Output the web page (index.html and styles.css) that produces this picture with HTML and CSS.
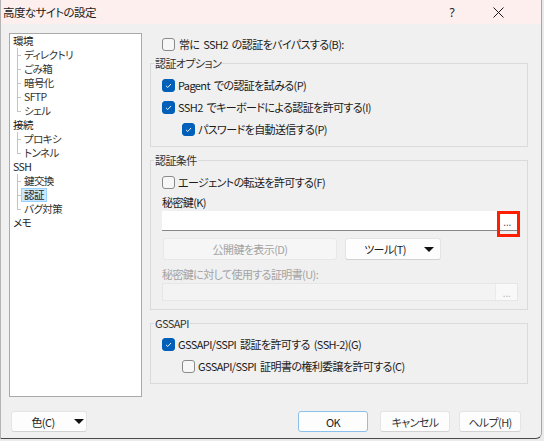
FILE: index.html
```html
<!DOCTYPE html>
<html lang="ja">
<head>
<meta charset="utf-8">
<title>高度なサイトの設定</title>
<link rel="stylesheet" href="styles.css">
</head>
<body>
<div class="window">
  <div class="titlebar">
    <span class="title">高度なサイトの設定</span>
    <span class="help">?</span>
    <span class="close"><svg width="11" height="11" viewBox="0 0 11 11"><path d="M0.5 0.5 L10.5 10.5 M10.5 0.5 L0.5 10.5" stroke="#1b1b1b" stroke-width="1" fill="none"/></svg></span>
  </div>
  <div class="main">
    <div class="tree">
      <div class="node">環境</div>
      <div class="child"><span class="conn"></span><span class="lbl">ディレクトリ</span></div>
      <div class="child"><span class="conn"></span><span class="lbl">ごみ箱</span></div>
      <div class="child"><span class="conn"></span><span class="lbl">暗号化</span></div>
      <div class="child"><span class="conn"></span><span class="lbl">SFTP</span></div>
      <div class="child"><span class="conn last"></span><span class="lbl">シェル</span></div>
      <div class="node">接続</div>
      <div class="child"><span class="conn"></span><span class="lbl">プロキシ</span></div>
      <div class="child"><span class="conn last"></span><span class="lbl">トンネル</span></div>
      <div class="node">SSH</div>
      <div class="child"><span class="conn"></span><span class="lbl">鍵交換</span></div>
      <div class="child"><span class="conn"></span><span class="lbl selected">認証</span></div>
      <div class="child"><span class="conn last"></span><span class="lbl">バグ対策</span></div>
      <div class="node">メモ</div>
    </div>
    <div class="content">
      <div class="toprow"><span class="cb"></span><span>常に SSH2 の認証をバイパスする(B):</span></div>

      <fieldset class="group g1">
        <legend>認証オプション</legend>
        <div class="gbody">
          <div class="row first"><span class="cb on"><svg viewBox="0 0 13 13"><path d="M3.6 6.9 L5.6 8.9 L9.5 4.7" stroke="#fff" stroke-width="1.1" fill="none"/></svg></span><span>Pagent での認証を試みる(P)</span></div>
          <div class="row"><span class="cb on"><svg viewBox="0 0 13 13"><path d="M3.6 6.9 L5.6 8.9 L9.5 4.7" stroke="#fff" stroke-width="1.1" fill="none"/></svg></span><span>SSH2 でキーボードによる認証を許可する(I)</span></div>
          <div class="row indent"><span class="cb on"><svg viewBox="0 0 13 13"><path d="M3.6 6.9 L5.6 8.9 L9.5 4.7" stroke="#fff" stroke-width="1.1" fill="none"/></svg></span><span>パスワードを自動送信する(P)</span></div>
        </div>
      </fieldset>

      <fieldset class="group g2">
        <legend>認証条件</legend>
        <div class="gbody">
          <div class="row first"><span class="cb"></span><span>エージェントの転送を許可する(F)</span></div>
          <div class="label">秘密鍵(K)</div>
          <div class="input">
            <span class="field"></span>
            <span class="dots">...</span>
            <span class="mark"></span>
          </div>
          <div class="btnrow">
            <span class="btn disabled pub">公開鍵を表示(D)</span>
            <span class="btn tool"><span class="tlabel">ツール(T)</span><span class="arrow"></span></span>
          </div>
          <div class="label dis">秘密鍵に対して使用する証明書(U):</div>
          <div class="input disabled">
            <span class="field"></span>
            <span class="dots">...</span>
          </div>
        </div>
      </fieldset>

      <fieldset class="group g3">
        <legend>GSSAPI</legend>
        <div class="gbody">
          <div class="row first"><span class="cb on"><svg viewBox="0 0 13 13"><path d="M3.6 6.9 L5.6 8.9 L9.5 4.7" stroke="#fff" stroke-width="1.1" fill="none"/></svg></span><span>GSSAPI/SSPI 認証を許可する (SSH-2)(G)</span></div>
          <div class="row indent"><span class="cb"></span><span>GSSAPI/SSPI 証明書の権利委譲を許可する(C)</span></div>
        </div>
      </fieldset>
    </div>
  </div>
  <div class="footer">
    <span class="btn color"><span class="clabel">色(C)</span><span class="arrow"></span></span>
    <span class="spacer"></span>
    <span class="btn ok">OK</span>
    <span class="btn cancel">キャンセル</span>
    <span class="btn helpbtn">ヘルプ(H)</span>
  </div>
</div>
</body>
</html>
```

FILE: styles.css
```css
* { box-sizing: border-box; }

body {
  margin: 0;
  width: 544px;
  height: 441px;
  overflow: hidden;
  background: #eaeaea;
  font-family: "Noto Sans CJK JP", "Noto Sans", sans-serif;
  font-size: 11px;
  letter-spacing: -0.6px;
  word-spacing: 2px;
  color: #1b1b1b;
  font-feature-settings: "palt";
}

.window {
  width: 542px;
  height: 439px;
  background: #f0f0f0;
  border-left: 1px solid #b4b4b4;
  border-right: 1px solid #a6a6a6;
  border-bottom: 1px solid #4a4a4a;
  border-bottom-right-radius: 6px;
  display: flex;
  flex-direction: column;
}

.titlebar {
  height: 24px;
  flex: none;
  background: #fcefee;
  display: flex;
  align-items: center;
  padding-left: 2px;
}
.title { font-size: 11.5px; line-height: 24px; }
.help {
  margin-left: auto;
  width: 20px;
  text-align: center;
  font-size: 12px;
  letter-spacing: 0;
  font-family: "Noto Sans", sans-serif;
}
.close {
  width: 20px;
  margin-left: 26px;
  margin-right: 33px;
  display: flex;
  justify-content: center;
}

.main {
  display: flex;
  padding: 9px 0 0 8px;
  gap: 8px;
}

.tree {
  width: 133px;
  height: 364px;
  flex: none;
  background: #fff;
  border: 1px solid #a9a9a9;
  padding: 0;
  font-size: 10.5px;
}
.node, .child {
  height: 14px;
  line-height: 14px;
  display: flex;
  align-items: center;
  white-space: nowrap;
}
.node { padding-left: 3px; }
.child { padding-left: 7px; }
.conn {
  width: 4px;
  height: 14px;
  flex: none;
  background:
    linear-gradient(#c4c4c4, #c4c4c4) 0 0 / 1px 100% no-repeat,
    linear-gradient(#c4c4c4, #c4c4c4) 0 7px / 4px 1px no-repeat;
}
.conn.last {
  background:
    linear-gradient(#c4c4c4, #c4c4c4) 0 0 / 1px 8px no-repeat,
    linear-gradient(#c4c4c4, #c4c4c4) 0 7px / 4px 1px no-repeat;
}
.lbl {
  padding: 0 2px;
  line-height: 12px;
  border: 1px solid transparent;
  color: #333;
}
.lbl.selected {
  background: #cce8ff;
  border-color: #99d1ff;
  color: #1b1b1b;
}

.content {
  width: 378px;
  display: flex;
  flex-direction: column;
}

.toprow {
  margin-top: 3px;
  height: 16px;
  padding-left: 12px;
  display: flex;
  align-items: center;
  gap: 4px;
}

.cb {
  width: 13px;
  height: 13px;
  flex: none;
  border: 1px solid #8a8a8a;
  border-radius: 3px;
  background: #f7f7f7;
  display: flex;
}
.cb.on {
  background: #005fb8;
  border-color: #005fb8;
}
.cb svg { width: 11px; height: 11px; }

.group {
  margin: 6px 0 0 0;
  padding: 0;
  border: 1px solid #dadada;
  min-width: 0;
}
.group.g1 { margin-top: 4px; }
legend {
  margin-left: 3px;
  padding: 0 1px;
  line-height: 14px;
  height: 14px;
  color: #333;
}
.gbody {
  padding: 0 9px 0 11px;
  display: flex;
  flex-direction: column;
}
.g1 .gbody { padding-bottom: 6px; }
.g2 .gbody { padding-bottom: 8px; }
.g3 .gbody { padding-bottom: 6px; }

.row {
  height: 22px;
  display: flex;
  align-items: center;
  gap: 3px;
  white-space: nowrap;
}
.g1 .row.first, .g2 .row.first { margin-top: 4px; }
.g3 .row.first { margin-top: 3px; }
.row.indent { padding-left: 20px; }

.label {
  margin-top: 2px;
  line-height: 14px;
  height: 14px;
}
.label.dis { margin-top: 7px; color: #a3a3a3; }

.input {
  margin-top: 2px;
  height: 20px;
  background: #fff;
  border-bottom: 1px solid #878787;
  display: flex;
  position: relative;
}
.input .field { flex: 1; }
.input .dots {
  width: 22px;
  text-align: center;
  font-size: 10px;
  line-height: 24px;
  letter-spacing: -0.5px;
  color: #555;
  font-family: "DejaVu Sans", sans-serif;
}
.input.disabled {
  height: 18px;
  background: #f3f3f3;
  border: 1px solid #e6e6e6;
}
.input.disabled .dots {
  background: #f8f8f8;
  border-left: 1px solid #ebebeb;
  color: #b8b8b8;
  line-height: 20px;
}
.mark {
  position: absolute;
  right: -2px;
  top: 0;
  width: 23px;
  height: 26px;
  border: 3px solid #ff1f00;
}

.btnrow {
  margin-top: 7px;
  height: 22px;
  display: flex;
  gap: 8px;
  padding-left: 1px;
}
.btn {
  height: 22px;
  display: flex;
  align-items: center;
  justify-content: center;
  background: #fdfdfd;
  border: 1px solid #e4e4e4;
  border-bottom-color: #d2d2d2;
  border-radius: 3px;
  white-space: nowrap;
}
.btn.disabled {
  background: #f6f6f6;
  border-color: #e8e8e8;
  color: #a3a3a3;
}
.pub { width: 174px; }
.tool { width: 96px; position: relative; justify-content: flex-start; }
.tlabel { width: 78px; text-align: center; }
.arrow {
  width: 0;
  height: 0;
  border-left: 5px solid transparent;
  border-right: 5px solid transparent;
  border-top: 5px solid #111;
}

.footer {
  display: flex;
  padding: 14px 20px 0 10px;
}
.footer .btn { height: 21px; }
.color { width: 76px; justify-content: flex-start; }
.clabel { width: 62px; text-align: center; }
.spacer { flex: 1; }
.ok { width: 70px; border-color: #8cc0ec; }
.cancel { width: 70px; margin-left: 12px; color: #333; }
.helpbtn { width: 62px; margin-left: 9px; color: #333; }
```
